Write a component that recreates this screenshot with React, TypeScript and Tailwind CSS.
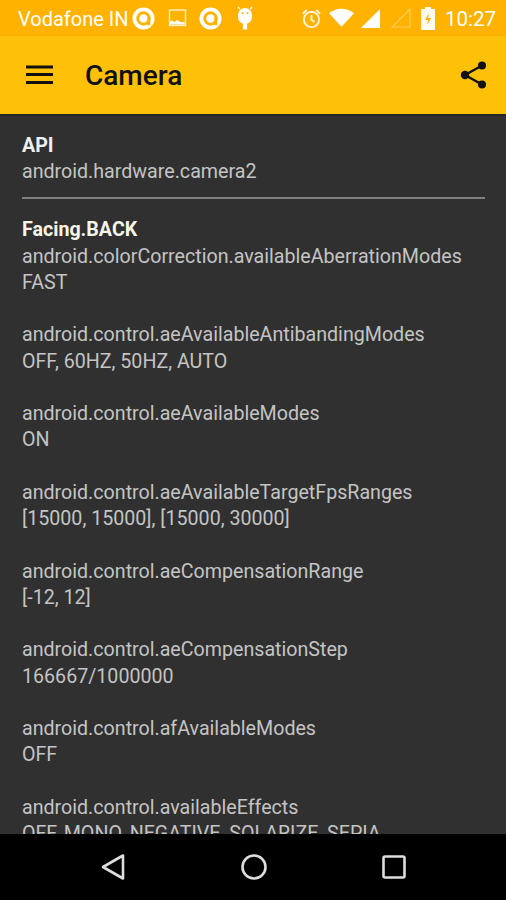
const rows: [string, string][] = [
  ["android.control.aeAvailableAntibandingModes", "OFF, 60HZ, 50HZ, AUTO"],
  ["android.control.aeAvailableModes", "ON"],
  ["android.control.aeAvailableTargetFpsRanges", "[15000, 15000], [15000, 30000]"],
  ["android.control.aeCompensationRange", "[-12, 12]"],
  ["android.control.aeCompensationStep", "166667/1000000"],
  ["android.control.afAvailableModes", "OFF"],
  ["android.control.availableEffects", "OFF, MONO, NEGATIVE, SOLARIZE, SEPIA"],
];

function NotifA() {
  return (
    <svg width="23" height="23" viewBox="0 0 24 24" className="shrink-0">
      <circle cx="12" cy="12" r="11.500" fill="#fff" />
      <circle cx="12" cy="12" r="6" fill="none" stroke="#ffb300" strokeWidth="3" />
      <rect x="16" y="11" width="3" height="8" fill="#ffb300" />
    </svg>
  );
}

export default function App() {
  return (
    <div className="flex h-[900px] w-[506px] flex-col overflow-hidden bg-[#303030] font-['Roboto',sans-serif]">
      <div className="flex h-9 shrink-0 items-center bg-[#ffb300] pl-[18px] pr-[10px] text-white">
        <span className="pt-[2px] text-[20px]">Vodafone IN</span>
        <span className="ml-[3px]"><NotifA /></span>
        <svg width="20" height="20" viewBox="0 0 20 20" className="ml-[13px] shrink-0">
          <rect x="1.500" y="2" width="16" height="15.500" fill="none" stroke="#fff" strokeOpacity=".8" strokeWidth="1.400" />
          <path d="M2 16.500v-3l2-1 2.500 1.500 2.500-2 3.500 2 4 0v2.500z" fill="#fff" />
        </svg>
        <span className="ml-[11px]"><NotifA /></span>
        <svg width="20" height="24" viewBox="0 0 20 24" className="ml-[13px] shrink-0">
          <path d="M3 9a7 7 0 0 1 14 0v2a7 7 0 0 1-14 0z" fill="#fff" />
          <path d="M8.500 18h3v5h-3zM5 3 3 1M15 3l2-2" stroke="#fff" fill="#fff" strokeWidth="1.200" />
          <circle cx="7.500" cy="7" r="1" fill="#ffb300" />
          <circle cx="12.500" cy="7" r="1" fill="#ffb300" />
        </svg>
        <div className="flex-1" />
        <svg width="21" height="21" viewBox="0 0 22 22" className="shrink-0">
          <circle cx="11" cy="12" r="8" fill="none" stroke="#fff" strokeOpacity=".85" strokeWidth="2" />
          <path d="M11 7.500V12.500l3 2M2 6l4-4M20 6l-4-4" fill="none" stroke="#fff" strokeOpacity=".85" strokeWidth="2" />
        </svg>
        <svg width="25" height="20" viewBox="0 0 26 20" className="ml-[7px] shrink-0">
          <path d="M0 5Q13-4 26 5L13 19z" fill="#fff" />
        </svg>
        <svg width="21" height="21" viewBox="0 0 22 22" className="ml-[6px] shrink-0">
          <path d="M21 1v20H1z" fill="#fff" />
        </svg>
        <svg width="20" height="20" viewBox="0 0 20 20" className="ml-[10px] shrink-0">
          <path d="M19 1v18H1z" fill="none" stroke="#fff" strokeOpacity=".35" strokeWidth="1.200" />
        </svg>
        <svg width="14" height="24" viewBox="0 0 14 24" className="ml-[10px] shrink-0">
          <path d="M4 1h6v2h4v21H0V3h4z" fill="#fff" fillOpacity=".95" />
          <path d="M8 7 4 14h3l-1 5 4-7H7z" fill="#ffb300" />
        </svg>
        <span className="ml-[10px] pt-[2px] text-[20.500px]">10:27</span>
      </div>

      <div className="flex h-[78px] shrink-0 items-center justify-between bg-[#ffc107] pl-[26px] pr-[19px] shadow-[0_1px_2px_rgba(0,0,0,0.35)]">
        <div className="flex items-center gap-[31px]">
          <svg width="28" height="20" viewBox="0 0 28 20">
            <path d="M0 2h27M0 9.500h27M0 17.500h27" stroke="#111" strokeWidth="2.800" />
          </svg>
          <span className="pt-[2px] text-[28px] font-medium text-[#111]">Camera</span>
        </div>
        <svg width="27" height="28" viewBox="0 0 27 28" fill="#111">
          <path d="M22 4.500 5 14l17 9.500" fill="none" stroke="#111" strokeWidth="2.400" />
          <circle cx="22" cy="4.500" r="4" />
          <circle cx="5" cy="14" r="4.200" />
          <circle cx="22" cy="23.500" r="4" />
        </svg>
      </div>

      <div className="min-h-0 flex-1 overflow-hidden pl-[22px] pr-[21px] pt-[18.600px] text-[19.650px] leading-[26.250px] text-[#c4c4c4]">
        <div className="font-bold text-[#f0f0f0]">API</div>
        <div>android.hardware.camera2</div>
        <div className="mb-[18.500px] mt-[12.400px] h-[1.500px] bg-[#808080]" />
        <div className="font-bold text-[#f5f5e8]">Facing.BACK</div>
        <div>android.colorCorrection.availableAberrationModes</div>
        <div>FAST</div>
        {rows.map(([k, v]) => (
          <div key={k} className="mt-[26.250px]">
            <div>{k}</div>
            <div className="whitespace-nowrap">{v}</div>
          </div>
        ))}
      </div>

      <div className="flex h-[66px] shrink-0 items-center justify-between bg-black pl-[100px] pr-[100px]">
        <svg width="26" height="28" viewBox="0 0 26 28">
          <path d="M23 2.500v23L3 14z" fill="none" stroke="#ddd" strokeWidth="2.600" strokeLinejoin="round" />
        </svg>
        <svg width="26" height="26" viewBox="0 0 26 26">
          <circle cx="13" cy="13" r="11.500" fill="none" stroke="#ddd" strokeWidth="2.600" />
        </svg>
        <svg width="24" height="24" viewBox="0 0 24 24">
          <rect x="1.500" y="1.500" width="21" height="21" rx="1.500" fill="none" stroke="#ddd" strokeWidth="2.600" />
        </svg>
      </div>
    </div>
  );
}
